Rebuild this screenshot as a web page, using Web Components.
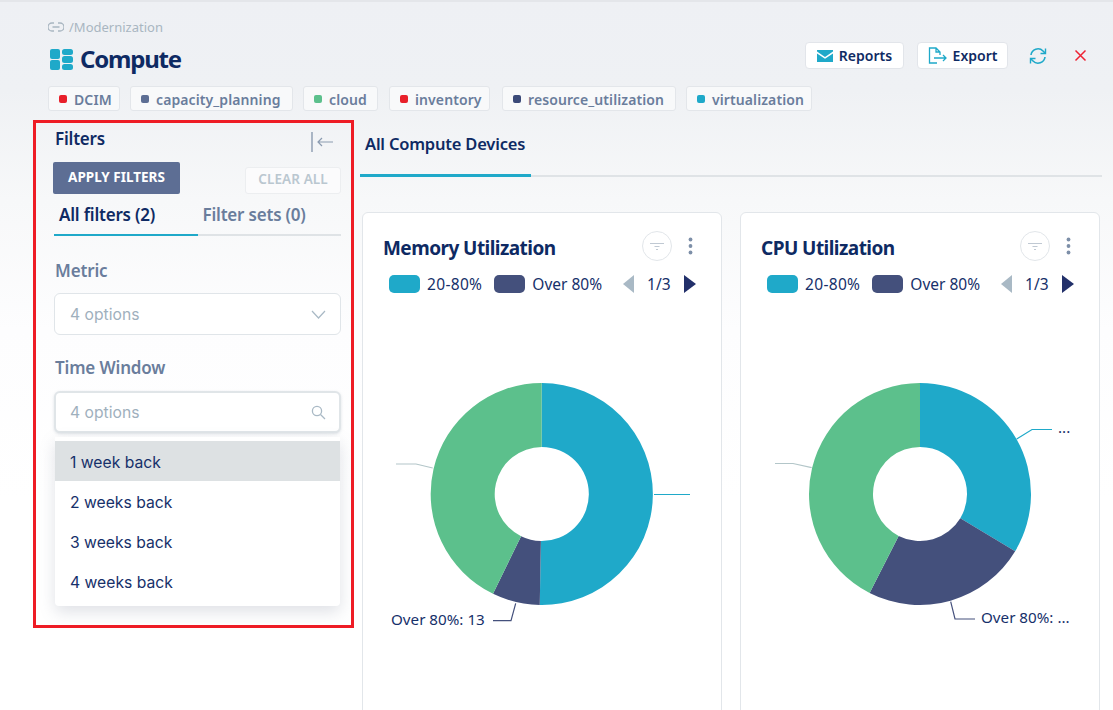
<!DOCTYPE html>
<html>
<head>
<meta charset="utf-8">
<title>Compute</title>
<style>
  html, body { margin: 0; height: 710px; overflow: hidden; }
  body {
    background: linear-gradient(180deg, #eef0f4 0, #eff1f4 90px, #f7f8f9 200px, #fdfdfe 330px, #fff 500px);
    border-top: 2px solid #e4e6ea;
    box-sizing: border-box;
    font-family: "Noto Sans", sans-serif;
    color: #0e2a63;
    position: relative;
  }
</style>
</head>
<body>
<compute-page></compute-page>

<script>
const HEAD_FONT = '"Noto Sans", sans-serif';
const BODY_FONT = 'Inter, "Noto Sans", sans-serif';

// small tag with coloured dot
class TagChip extends HTMLElement {
  constructor() {
    super();
    this.attachShadow({mode: "open"}).innerHTML = `
      <style>
        :host { display: inline-flex; align-items: center; height: 25px; box-sizing: border-box; flex: none;
          padding: 1px 0 0 10px; background: #f8f9fa; border: 1px solid #e3e6ea; border-radius: 3px;
          font: 600 14px ${HEAD_FONT}; color: #6a7d9c; white-space: nowrap; letter-spacing: .1px; }
        i { width: 8px; height: 8px; border-radius: 2px; margin-right: 7px; background: ${this.getAttribute("color")}; }
      </style><i></i><slot></slot>`;
  }
}
customElements.define("tag-chip", TagChip);

class ActionButton extends HTMLElement {
  constructor() {
    super();
    this.attachShadow({mode: "open"}).innerHTML = `
      <style>
        :host { display: inline-flex; align-items: center; justify-content: center; gap: 6px; height: 27px; box-sizing: border-box;
          background: #fff; border: 1px solid #e2e5ea; border-radius: 4px;
          font: 600 14px ${HEAD_FONT}; color: #0e2a63; }
        ::slotted(svg) { display: block; }
      </style><slot name="icon"></slot><slot></slot>`;
  }
}
customElements.define("action-button", ActionButton);

class PageHeader extends HTMLElement {
  constructor() {
    super();
    this.attachShadow({mode: "open"}).innerHTML = `
      <style>
        :host { display: block; height: 120px; box-sizing: border-box; padding: 16px 0 0 48px; position: relative; }
        .crumb { display: flex; align-items: center; gap: 5px; height: 18px; font: 400 13px ${HEAD_FONT}; color: #a9b6c1; }
        .title { display: flex; align-items: center; gap: 7px; margin: 10px 0 0 2px; height: 24px;
          font: 700 24px ${HEAD_FONT}; color: #0e2a63; letter-spacing: -1.2px; }
        .title svg { margin-top: 2px; }
        .tags { display: flex; margin-top: 16px; }
        .actions { display: flex; align-items: center; position: absolute; top: 40px; left: 805px; }
        tag-chip { margin-right: 10px; }
      </style>
      <div class="crumb">
        <svg width="16" height="10" viewBox="0 0 16 10" fill="none" stroke="#a9b6c1" stroke-width="1.3"><path d="M6 1H4a4 4 0 0 0 0 8h2M10 1h2a4 4 0 0 1 0 8h-2M4.5 5h7"/></svg>
        <span>/Modernization</span>
      </div>
      <div class="title">
        <svg width="23" height="21" viewBox="0 0 23 21" fill="#1fa9c9">
          <rect width="10" height="10" rx="2"/><rect y="11" width="10" height="10" rx="2"/>
          <rect x="12" width="11" height="6" rx="2.5"/><rect x="12" y="7" width="11" height="7" rx="2.5"/><rect x="12" y="15" width="11" height="6" rx="2.5"/>
        </svg>
        <span>Compute</span>
      </div>
      <div class="tags">
        <tag-chip color="#e8202a" style="width:72px">DCIM</tag-chip>
        <tag-chip color="#5d6e94" style="width:163px">capacity_planning</tag-chip>
        <tag-chip color="#5cc08c" style="width:75px;margin-right:11px">cloud</tag-chip>
        <tag-chip color="#e8202a" style="width:101px;margin-right:12px">inventory</tag-chip>
        <tag-chip color="#3b4a78" style="width:174px">resource_utilization</tag-chip>
        <tag-chip color="#1fa9c9" style="width:126px">virtualization</tag-chip>
      </div>
      <div class="actions">
        <action-button style="width:99px">
          <svg slot="icon" width="16" height="12" viewBox="0 0 16 12"><path fill="#1fa9c9" d="M0 0h16v1.6L8 7 0 1.6zM0 3.4 8 8.8l8-5.4V12H0z"/></svg>
          Reports
        </action-button>
        <action-button style="width:91px;margin-left:13px">
          <svg slot="icon" width="19" height="17" viewBox="0 0 19 17" fill="none" stroke="#1fa9c9" stroke-width="1.3"><path d="M9 16H1.5V1H8l4 4v3M8 1v4h4"/><path d="M6 11h12M15 8l3 3-3 3"/></svg>
          Export
        </action-button>
        <svg style="margin-left:21px" width="18" height="18" viewBox="0 0 18 18" fill="none" stroke="#1fa9c9" stroke-width="1.6">
          <path d="M2 8a7 7 0 0 1 12-4l2 2"/><path d="M16.5 1.5V6.5H11.5" stroke-width="1.4"/>
          <path d="M16 10a7 7 0 0 1-12 4l-2-2"/><path d="M1.5 16.5V11.5H6.5" stroke-width="1.4"/>
        </svg>
        <svg style="margin-left:27px" width="13" height="13" viewBox="0 0 13 13" stroke="#ee2233" stroke-width="1.5"><path d="M1.5 1.5l10 10M11.5 1.5l-10 10"/></svg>
      </div>`;
  }
}
customElements.define("page-header", PageHeader);

class FilterOption extends HTMLElement {
  constructor() {
    super();
    this.attachShadow({mode: "open"}).innerHTML = `
      <style>
        :host { display: flex; align-items: center; height: 40px; box-sizing: border-box; padding: 2px 0 0 15px;
          font: 400 15.7px ${BODY_FONT}; color: #16306a; }
        :host([active]) { background: #dde1e3; }
      </style><slot></slot>`;
  }
}
customElements.define("filter-option", FilterOption);

class FilterSelect extends HTMLElement {
  constructor() {
    super();
    const open = this.hasAttribute("open");
    const icon = open
      ? `<svg width="15" height="15" viewBox="0 0 15 15" fill="none" stroke="#a9b9c5" stroke-width="1.3"><circle cx="6" cy="6" r="4.6"/><path d="M9.5 9.5l4.5 4.5"/></svg>`
      : `<svg width="15" height="9" viewBox="0 0 15 9" fill="none" stroke="#a9b9c5" stroke-width="1.2"><path d="M1 1l6.5 7L14 1"/></svg>`;
    this.attachShadow({mode: "open"}).innerHTML = `
      <style>
        :host { display: block; }
        .label { height: 22px; font: 600 17px/22px ${HEAD_FONT}; color: #6a7d9c; padding-left: 1px; letter-spacing: -.15px; }
        .box { display: flex; justify-content: space-between; align-items: center; height: 42px; box-sizing: border-box;
          margin-top: 11px; padding: 0 14px 0 15px; background: #fff; border: 1px solid #e0e5e9; border-radius: 6px;
          font: 400 15.7px ${BODY_FONT}; color: #9fb0bd; }
        :host([open]) .box { margin-top: 12px; border: 2px solid #e0e5e8; padding-left: 14px; padding-right: 13px; box-shadow: 0 1px 3px rgba(120,135,150,.25); }
        .menu { margin: 4px 1px 0; padding: 4px 0 5px; background: #fff; border-radius: 0 0 4px 4px;
          box-shadow: 0 6px 16px rgba(110,120,140,.22); }
      </style>
      <div class="label">${this.getAttribute("label")}</div>
      <div class="box"><span>4 options</span>${icon}</div>
      ${open ? `<div class="menu"><slot></slot></div>` : ""}`;
  }
}
customElements.define("filter-select", FilterSelect);

class FilterPanel extends HTMLElement {
  constructor() {
    super();
    this.attachShadow({mode: "open"}).innerHTML = `
      <style>
        :host { display: block; width: 287px; flex: none; }
        .top { display: flex; justify-content: space-between; align-items: center; height: 20px; margin-top: 6px; padding: 0 8px 0 1px;
          font: 600 17px ${HEAD_FONT}; color: #0e2a63; letter-spacing: -.2px; }
        .top svg { margin-top: 8px; }
        .btns { display: flex; justify-content: space-between; align-items: flex-end; margin: 14px 0 0 -1px; }
        .apply { display: flex; align-items: center; justify-content: center; width: 127px; height: 32px; box-sizing: border-box; padding-bottom: 2px; border-radius: 2px; background: #5d6e94;
          font: 700 13.5px ${HEAD_FONT}; color: #fff; }
        .clear { display: flex; align-items: center; justify-content: center; width: 96px; height: 27px; box-sizing: border-box; padding-bottom: 3px;
          background: #fbfbfc; border: 1px solid #eceef0; border-radius: 3px; font: 600 13.5px ${HEAD_FONT}; color: #bac7d0; letter-spacing: .1px; }
        .tabs { display: flex; height: 42px; }
        .tabs div { flex: 1; box-sizing: border-box; padding: 9px 0 0 5px; font: 600 17px ${HEAD_FONT}; color: #6a7d9c; letter-spacing: -.2px;
          border-bottom: 2px solid #dfe3e6; }
        .tabs div:first-child { color: #0e2a63; border-bottom: 2.5px solid #1fa9c9; }
        .metric { margin-top: 24px; }
        .time { margin-top: 22px; }
      </style>
      <div class="top">
        <span>Filters</span>
        <svg width="22" height="20" viewBox="0 0 22 20" fill="none" stroke="#8b9bb0" stroke-width="1.2"><path d="M1 0v20" stroke-width="1.4"/><path d="M22 10H7M11 6l-4 4 4 4"/></svg>
      </div>
      <div class="btns"><div class="apply">APPLY FILTERS</div><div class="clear">CLEAR ALL</div></div>
      <div class="tabs"><div>All filters (2)</div><div>Filter sets (0)</div></div>
      <filter-select class="metric" label="Metric"></filter-select>
      <filter-select class="time" label="Time Window" open>
        <filter-option active>1 week back</filter-option>
        <filter-option>2 weeks back</filter-option>
        <filter-option>3 weeks back</filter-option>
        <filter-option>4 weeks back</filter-option>
      </filter-select>`;
  }
}
customElements.define("filter-panel", FilterPanel);

const CHARTS = {
  memory: {
    cx: 178.7, cy: 194, angles: [181, 206],
    lines: [
      ["#b3c6c9", "69.7,168 53,164 33,164"],
      ["#1fa9c9", "291,194.5 327,194.5"],
      ["#44507c", "152.7,303.3 148,320.7 130,320.7"]
    ],
    labels: [[28, 325, "Over 80%: 13"]]
  },
  cpu: {
    cx: 179, cy: 194, angles: [121, 207],
    lines: [
      ["#b3c6c9", "70.7,167.7 52,163.5 34,163.5"],
      ["#1fa9c9", "275.7,139 291,129.5 311,129.5"],
      ["#44507c", "209.7,301.7 214,319 234,319"]
    ],
    labels: [[317, 133, "..."], [240, 323, "Over 80%: ..."]]
  }
};

function ringSlice(cx, cy, from, to) {
  const R = 111, r = 47;
  const pt = (rad, a) => {
    const t = a * Math.PI / 180;
    return (cx + rad * Math.sin(t)).toFixed(2) + " " + (cy - rad * Math.cos(t)).toFixed(2);
  };
  const big = to - from > 180 ? 1 : 0;
  return `M${pt(R, from)}A${R} ${R} 0 ${big} 1 ${pt(R, to)}L${pt(r, to)}A${r} ${r} 0 ${big} 0 ${pt(r, from)}Z`;
}

class DonutChart extends HTMLElement {
  constructor() {
    super();
    this.shadowDOM = this.attachShadow({mode: "open"});
  }
  connectedCallback() {
    const c = CHARTS[this.getAttribute("data")];
    const [a, b] = c.angles;
    this.shadowDOM.innerHTML = `
      <style>
        :host { display: block; height: 410px; }
        svg { display: block; }
        text { font: 400 15.2px ${HEAD_FONT}; fill: #16306a; }
      </style>
      <svg width="358" height="410" viewBox="0 0 358 410">
        <path fill="#1fa9c9" d="${ringSlice(c.cx, c.cy, 0, a)}"/>
        <path fill="#44507c" d="${ringSlice(c.cx, c.cy, a, b)}"/>
        <path fill="#5cc08c" d="${ringSlice(c.cx, c.cy, b, 360)}"/>
        ${c.lines.map(l => `<polyline fill="none" stroke="${l[0]}" stroke-width="1.2" points="${l[1]}"/>`).join("")}
        ${c.labels.map(l => `<text x="${l[0]}" y="${l[1]}">${l[2]}</text>`).join("")}
      </svg>`;
  }
}
customElements.define("donut-chart", DonutChart);

class ChartCard extends HTMLElement {
  constructor() {
    super();
    this.attachShadow({mode: "open"}).innerHTML = `
      <style>
        :host { display: block; width: 360px; flex: none; box-sizing: border-box; height: 520px; background: #fff;
          border: 1px solid #e2e6ea; border-radius: 6px; }
        .head { display: flex; align-items: center; height: 34px; margin-top: 17px; padding-left: 20px; }
        .name { flex: 1; padding-top: 2px; font: 700 19px ${HEAD_FONT}; color: #0e2a63; letter-spacing: -.55px; }
        .circle { display: flex; align-items: center; justify-content: center; width: 30px; height: 30px; box-sizing: border-box; border: 1px solid #e2e6ea; border-radius: 50%; margin-bottom: 2px; }
        .dots { margin: 0 28px 2px 16px; }
        .legend { display: flex; align-items: center; height: 18px; margin-top: 11px; padding-left: 26px; font: 400 15.5px ${HEAD_FONT}; color: #16306a; }
        .sw { width: 31px; height: 18px; border-radius: 5px; margin-right: 7px; }
        .tri { display: block; }
        .pct { letter-spacing: .33px; }
      </style>
      <div class="head">
        <div class="name"><slot></slot></div>
        <div class="circle"><svg width="14" height="7" viewBox="0 0 14 7" stroke="#a5b2c0" stroke-width=".7"><path d="M0 .5h14M4.500 3.500h5M6 6.500h2"/></svg></div>
        <svg class="dots" width="5" height="18" viewBox="0 0 5 18" fill="#7d8fa8"><circle cx="2.5" cy="2.5" r="1.9"/><circle cx="2.5" cy="9" r="1.9"/><circle cx="2.5" cy="15.500" r="1.9"/></svg>
      </div>
      <div class="legend">
        <div class="sw" style="background:#1fa9c9"></div><span class="pct">20-80%</span>
        <div class="sw" style="background:#44507c;margin-left:12px"></div><span>Over 80%</span>
        <svg class="tri" style="margin:0 13px 0 21px" width="11" height="18" viewBox="0 0 11 18"><path fill="#a9b9c5" d="M11 0v18L0 9z"/></svg>
        <span>1/3</span>
        <svg class="tri" style="margin-left:13px" width="12" height="18" viewBox="0 0 12 18"><path fill="#22306a" d="M0 0v18l12-9z"/></svg>
      </div>
      <donut-chart data="${this.getAttribute("chart")}" style="margin-top:7px"></donut-chart>`;
  }
}
customElements.define("chart-card", ChartCard);

class ComputePage extends HTMLElement {
  constructor() {
    super();
    this.attachShadow({mode: "open"}).innerHTML = `
      <style>
        :host { display: block; }
        .main { display: flex; gap: 19px; padding-left: 54px; }
        .content { flex: none; width: 742px; }
        .tabs { display: flex; height: 55px; box-sizing: border-box; border-bottom: 2px solid #dfe3e6; }
        .tabs div { width: 171px; box-sizing: border-box; height: 55px; padding: 10px 0 0 5px; border-bottom: 3px solid #1fa9c9;
          font: 600 16.5px ${HEAD_FONT}; color: #0e2a63; letter-spacing: -.2px; white-space: nowrap; }
        .cards { display: flex; gap: 18px; margin: 35px 0 0 2px; }
        .mark { position: absolute; left: 33px; top: 118px; width: 321px; height: 508px; box-sizing: border-box; border: 3px solid #ee1c25; pointer-events: none; }
      </style>
      <page-header></page-header>
      <div class="main">
        <filter-panel></filter-panel>
        <div class="content">
          <div class="tabs"><div>All Compute Devices</div></div>
          <div class="cards">
            <chart-card chart="memory">Memory Utilization</chart-card>
            <chart-card chart="cpu">CPU Utilization</chart-card>
          </div>
        </div>
      </div>
      <div class="mark"></div>`;
  }
}
customElements.define("compute-page", ComputePage);
</script>
</body>
</html>
